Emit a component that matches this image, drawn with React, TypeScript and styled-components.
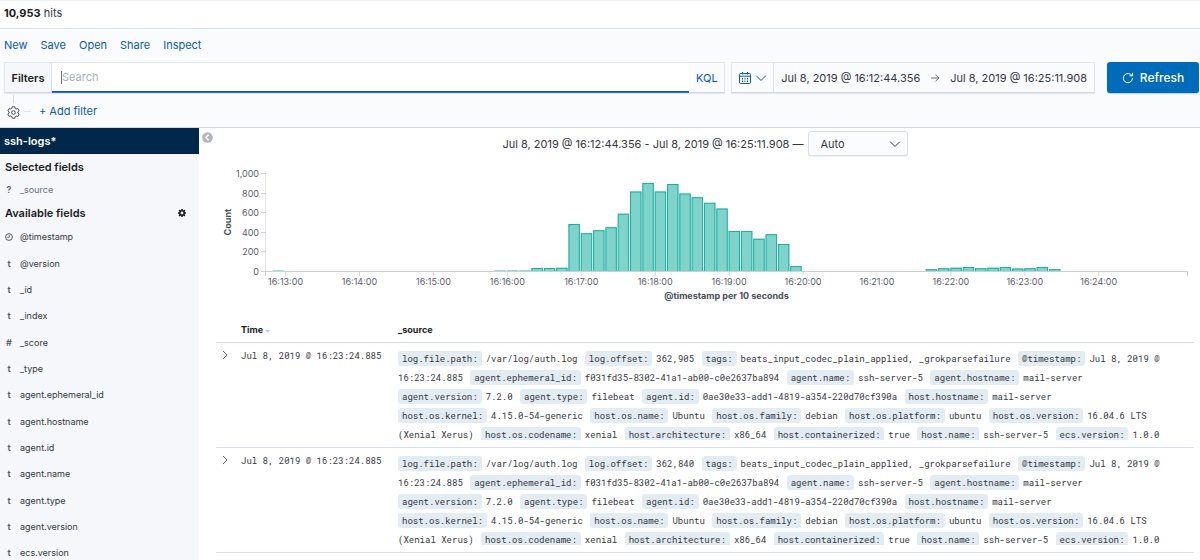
import React, { Fragment } from "react";
import styled, { createGlobalStyle, css } from "styled-components";

const sans = `Inter, "Liberation Sans", sans-serif`;
const mono = `"Roboto Mono", "DejaVu Sans Mono", "Liberation Mono", monospace`;

const GlobalStyle = createGlobalStyle`
  * { box-sizing: border-box; }
  html, body, #root { height: 100%; }
  body {
    margin: 0;
    overflow: hidden;
    background: #fff;
    color: #343741;
    font-family: ${sans};
    font-size: 11px;
    line-height: 16px;
  }
  button, input, select { font: inherit; color: inherit; }
  button { cursor: pointer; }
`;

const Page = styled.div`
  display: flex;
  flex-direction: column;
  height: 100%;
  border-top: 1px solid #f0f1f3;
`;

const Hits = styled.header`
  padding: 4px;
  height: 28px;
  border-bottom: 1px solid #dfe3ec;
  strong { color: #1a1c21; font-weight: 700; }
`;

const Toolbar = styled.section`
  background: #fafbfd;
  border-bottom: 1px solid #d3dae6;
  padding: 8px 1px 8px 4px;
`;

const Menu = styled.nav`
  display: flex;
  gap: 13px;
  margin-bottom: 9px;
`;

const TextLink = styled.a`
  color: #0a5aa8;
  text-decoration: none;
`;

const QueryRow = styled.div`
  display: flex;
  height: 31px;
`;

const QueryBox = styled.div`
  flex: 1;
  display: flex;
  border: 1px solid #e3e6ec;
  border-bottom-color: #d3d8e0;
  box-shadow: 0 1px 1px #e6e9ef;
  margin-right: 6px;
`;

const FiltersButton = styled.button`
  width: 47px;
  padding: 0;
  border: 0;
  border-right: 1px solid #dde1e9;
  background: #f5f7fa;
  color: #1a1c21;
  font-weight: 600;
`;

const SearchField = styled.label`
  flex: 1;
  display: flex;
  align-items: center;
  background: #fff;
  border-bottom: 1px solid #0a5aa8;
  box-shadow: 0 1px 0 #2a6fb3;
  padding-left: 9px;
  &::before {
    content: "";
    width: 1px;
    height: 13px;
    background: #69707d;
  }
`;

const SearchInput = styled.input`
  flex: 1;
  min-width: 0;
  border: 0;
  outline: 0;
  padding: 0;
  background: transparent;
  &::placeholder { color: #a9aeb8; opacity: 1; }
`;

const LanguageButton = styled.button`
  width: 35px;
  padding: 0;
  border: 0;
  background: #fafbfd;
  color: #0a5aa8;
`;

const DateBox = styled.div`
  display: flex;
  align-items: center;
  border: 1px solid #e3e6ec;
  border-bottom-color: #d3d8e0;
  box-shadow: 0 1px 1px #e6e9ef;
  margin-right: 12px;
`;

const QuickDates = styled.button`
  display: flex;
  align-items: center;
  gap: 4px;
  height: 100%;
  width: 42px;
  padding: 0 0 0 7px;
  border: 0;
  border-right: 1px solid #dde1e9;
  background: transparent;
  color: #0a5aa8;
`;

const DateButton = styled.button`
  padding: 0 7px;
  border: 0;
  background: transparent;
  white-space: nowrap;
`;

const RefreshButton = styled.button`
  display: flex;
  align-items: center;
  justify-content: center;
  gap: 6px;
  width: 92px;
  padding: 0;
  border: 0;
  border-radius: 3px;
  background: #006bb8;
  color: #fff;
  font-size: 12px;
  font-weight: 500;
  box-shadow: 0 1px 1px #b9cbdc;
`;

const FilterRow = styled.div`
  display: flex;
  align-items: center;
  margin-top: 10px;
`;

const FilterOptions = styled.button`
  position: relative;
  display: flex;
  padding: 0;
  margin: 2px 0 0 3px;
  border: 0;
  background: transparent;
  &::before {
    content: "";
    position: absolute;
    left: 6px;
    bottom: 16px;
    width: 1px;
    height: 8px;
    background: #d3dae6;
  }
`;

const Dash = styled.span`
  width: 7px;
  height: 1px;
  margin: 0 8px 0 4px;
  background: #dde2ea;
`;

const Body = styled.div`
  flex: 1;
  min-height: 0;
  display: flex;
`;

const Sidebar = styled.aside`
  width: 199px;
  flex: none;
  overflow: hidden;
  background: #f5f7fa;
`;

const IndexPattern = styled.h2`
  margin: 0 0 5px;
  padding: 5px 4px;
  background: #01284a;
  color: #fff;
  font-size: 11px;
  line-height: 16px;
  font-weight: 600;
`;

const GroupTitle = styled.h3`
  display: flex;
  align-items: center;
  justify-content: space-between;
  margin: 0;
  padding: 0 13px 0 5px;
  color: #1a1c21;
  font-size: 11px;
  line-height: 16px;
  font-weight: 600;
`;

const FieldList = styled.ul`
  list-style: none;
  margin: 0;
  padding: 3px 0;
  font-size: 9px;
`;

const Field = styled.li<{ $muted?: boolean }>`
  display: flex;
  align-items: center;
  padding-left: 4px;
  ${(p) =>
    p.$muted
      ? css`
          height: 24px;
          color: #69707d;
        `
      : css`
          height: 26px;
          &:nth-child(3n + 1) { margin-bottom: 1px; }
        `}
`;

const FieldType = styled.span`
  display: flex;
  justify-content: center;
  width: 10px;
  margin-right: 6px;
  font-weight: 600;
  color: #535966;
`;

const Main = styled.main`
  position: relative;
  flex: 1;
  min-width: 0;
  overflow: hidden;
  padding: 3px 6px 0 17px;
`;

const CollapseButton = styled.button`
  position: absolute;
  left: 3px;
  top: 4px;
  display: flex;
  padding: 0;
  border: 0;
  background: transparent;
`;

const RangeRow = styled.div`
  display: flex;
  align-items: center;
  justify-content: center;
  gap: 4px;
`;

const IntervalField = styled.label`
  position: relative;
  svg { position: absolute; right: 7px; top: 7px; pointer-events: none; }
`;

const IntervalSelect = styled.select`
  appearance: none;
  width: 100px;
  height: 25px;
  padding: 0 24px 0 12px;
  border: 1px solid #d9dee8;
  border-radius: 3px;
  background: #fbfcfd;
  box-shadow: 0 1px 1px #eceff4;
`;

const Chart = styled.svg`
  display: block;
  width: 100%;
  margin-top: 4px;
  overflow: visible;
  font-family: ${sans};
  font-size: 9px;
  fill: #5a606b;
`;

const Docs = styled.table`
  width: 100%;
  margin-top: 15px;
  border-collapse: collapse;
  table-layout: fixed;
  th {
    padding: 5px 0;
    text-align: left;
    color: #1a1c21;
    font-size: 9px;
    line-height: 15px;
    font-weight: 700;
  }
  tr { border-bottom: 1px solid #d9dfea; }
  td { padding: 0; vertical-align: top; }
`;

const ExpandCol = styled.col`width: 25px;`;
const TimeCol = styled.col`width: 157px;`;

const ExpandButton = styled.button`
  display: flex;
  margin: 7px 0 0 4px;
  padding: 0;
  border: 0;
  background: transparent;
`;

const Time = styled.time`
  display: block;
  padding-top: 5px;
  font-family: ${mono};
  font-size: 9px;
  line-height: 16px;
  white-space: nowrap;
`;

const Source = styled.div`
  max-height: 91px;
  margin: 6px 0 7px;
  padding-right: 30px;
  overflow: hidden;
  font-family: ${mono};
  font-size: 9px;
  line-height: 19px;
`;

const Unbroken = styled.span`
  white-space: nowrap;
`;

const Key = styled.span`
  display: inline-block;
  padding: 0 4px;
  margin-right: 4px;
  border-radius: 3px;
  background: #e3ecf3;
  line-height: 15px;
`;

const Value = styled.span<{ $last: boolean }>`
  margin-right: ${(p) => (p.$last ? 2 : 0)}px;
`;

const fields: [string, string][] = [
  ["clock", "@timestamp"],
  ["t", "@version"],
  ["t", "_id"],
  ["t", "_index"],
  ["#", "_score"],
  ["t", "_type"],
  ["t", "agent.ephemeral_id"],
  ["t", "agent.hostname"],
  ["t", "agent.id"],
  ["t", "agent.name"],
  ["t", "agent.type"],
  ["t", "agent.version"],
  ["t", "ecs.version"],
];

const source = (offset: string): [string, string][] => [
  ["log.file.path", "/var/log/auth.log"],
  ["log.offset", offset],
  ["tags", "beats_input_codec_plain_applied, _grokparsefailure"],
  ["@timestamp", "Jul 8, 2019 @ 16:23:24.885"],
  ["agent.ephemeral_id", "f031fd35-8302-41a1-ab00-c0e2637ba894"],
  ["agent.name", "ssh-server-5"],
  ["agent.hostname", "mail-server"],
  ["agent.version", "7.2.0"],
  ["agent.type", "filebeat"],
  ["agent.id", "0ae30e33-add1-4819-a354-220d70cf390a"],
  ["host.hostname", "mail-server"],
  ["host.os.kernel", "4.15.0-54-generic"],
  ["host.os.name", "Ubuntu"],
  ["host.os.family", "debian"],
  ["host.os.platform", "ubuntu"],
  ["host.os.version", "16.04.6 LTS (Xenial Xerus)"],
  ["host.os.codename", "xenial"],
  ["host.architecture", "x86_64"],
  ["host.containerized", "true"],
  ["host.name", "ssh-server-5"],
  ["ecs.version", "1.0.0"],
];

const docs = [source("362,905"), source("362,840")];

/* Ten-second buckets, numbered from 16:13:00. */
const buckets: [number, number[]][] = [
  [-1, [8]],
  [17, [9, 10, 10, 31, 31, 34, 481, 386, 417, 447, 586, 812, 898, 812, 887, 791, 754, 696, 638, 409, 409, 331, 376, 276, 51]],
  [52, [20, 30, 35, 41, 30, 35, 41, 27, 30, 41, 20]],
];

const CHART = { left: 50, right: 971, top: 13, bottom: 111, minute: 73.85, origin: 69.5 };

const Chevron = ({ size = 12, d = "M1.5 4l4.5 4.5L10.5 4" }: { size?: number; d?: string }) => (
  <svg width={size} height={size} viewBox="0 0 12 12" fill="none" stroke="currentColor" strokeWidth="1">
    <path d={d} strokeLinecap="round" strokeLinejoin="round" />
  </svg>
);

const GearOutline = () => (
  <svg width="13" height="13" viewBox="0 0 16 16" fill="none" stroke="#343741" strokeWidth="1.1" strokeLinejoin="round">
    <path d="M6.4 1h3.2l.5 2 1.2.7 2-.6 1.6 2.8L13.4 7.3v1.4l1.5 1.4-1.6 2.8-2-.6-1.2.7-.5 2H6.4l-.5-2-1.2-.7-2 .6-1.6-2.8 1.5-1.4V7.3L1.1 5.9l1.6-2.8 2 .6 1.2-.7z" />
    <circle cx="8" cy="8" r="2.3" />
  </svg>
);

const GearSolid = () => (
  <svg width="8" height="8" viewBox="0 0 16 16" fill="none" stroke="#1a1c21">
    <circle cx="8" cy="8" r="4.5" strokeWidth="3.2" />
    <path d="M8 0v3M8 13v3M0 8h3M13 8h3M2.3 2.3l2.2 2.2M11.5 11.5l2.2 2.2M2.3 13.7l2.2-2.2M11.5 4.5l2.2-2.2" strokeWidth="3" />
  </svg>
);

const Calendar = () => (
  <svg width="12" height="12" viewBox="0 0 12 12" fill="none" stroke="currentColor">
    <rect x=".5" y="1.5" width="11" height="10" rx="1" />
    <path d="M.5 4.2h11M3.5 0v2.5M8.5 0v2.5" />
    <path d="M3 6.5h6M3 8h6M3 9.5h6" strokeDasharray="1 1.5" />
  </svg>
);

const Refresh = () => (
  <svg width="12" height="12" viewBox="0 0 12 12" fill="none" stroke="currentColor" strokeWidth="1">
    <path d="M10.5 6.2A4.6 4.6 0 1 1 8.6 2.4L10.3 3.6" />
    <path d="M10.5.8v3H7.6" />
  </svg>
);

const Clock = () => (
  <svg width="8" height="8" viewBox="0 0 8 8" fill="none" stroke="#535966">
    <circle cx="4" cy="4" r="3.4" />
    <path d="M4.3 1.8v2.5H2.2" strokeWidth=".8" />
  </svg>
);

function Histogram() {
  const { left, right, top, bottom, minute, origin } = CHART;
  const y = (count: number) => bottom - (count / 1000) * (bottom - top);
  const pitch = minute / 6;
  return (
    <Chart viewBox="0 0 977 142" role="img" aria-label="Count of @timestamp per 10 seconds">
      <path d={`M${left - 0.5} ${top}V${bottom}`} stroke="#e6e6e6" />
      {buckets.map(([start, counts]) =>
        counts.map((count, i) => {
          const x = origin + (start + i) * pitch - 0.5;
          const w = pitch - 0.9;
          return (
            <g key={start + i}>
              <rect x={x} y={y(count)} width={w} height={bottom - y(count)} fill="#80d3cb" />
              {count > 10 && (
                <path d={`M${x + 0.5} ${bottom}V${y(count) + 0.5}h${w - 1}V${bottom}`} fill="none" stroke="#1bb0a3" />
              )}
            </g>
          );
        }),
      )}
      <path d={`M${left} ${bottom + 0.5}H${right}M${left - 0.5} ${bottom}v5M${right - 0.5} ${bottom}v5`} stroke="#cfcfcf" fill="none" />
      {[0, 200, 400, 600, 800, 1000].map((v) => (
        <Fragment key={v}>
          <path d={`M${left - 5} ${Math.round(y(v)) + 0.5}h5`} stroke="#cfcfcf" />
          <text x={left - 7} y={y(v) + 4} textAnchor="end">
            {v.toLocaleString("en-US")}
          </text>
        </Fragment>
      ))}
      {Array.from({ length: 12 }, (_, i) => (
        <Fragment key={i}>
          <path d={`M${origin + i * minute} ${bottom + 1}v4`} stroke="#d6d6d6" />
          <text x={origin + i * minute} y={bottom + 14} textAnchor="middle">
            {`16:${13 + i}:00`}
          </text>
        </Fragment>
      ))}
      <g fontWeight="700" fill="#4a4e58" textAnchor="middle">
        <text transform="translate(15 62) rotate(-90)">Count</text>
        <text x="510" y="139">@timestamp per 10 seconds</text>
      </g>
    </Chart>
  );
}

/* A key never parts from the first word of its value. */
function SourceCell({ entries }: { entries: [string, string][] }) {
  return (
    <Source>
      {entries.map(([key, value]) => {
        const [first, ...rest] = value.split(" ");
        return (
          <Fragment key={key}>
            <Unbroken>
              <Key>{`${key}:`}</Key>
              <Value $last={rest.length === 0}>{first}</Value>
            </Unbroken>{" "}
            {rest.length > 0 && <Value $last>{rest.join(" ")}</Value>}{" "}
          </Fragment>
        );
      })}
    </Source>
  );
}

export default function App() {
  return (
    <Page>
      <GlobalStyle />
      <Hits>
        <strong>10,953</strong> hits
      </Hits>
      <Toolbar>
        <Menu>
          {["New", "Save", "Open", "Share", "Inspect"].map((item) => (
            <TextLink href="#" key={item}>{item}</TextLink>
          ))}
        </Menu>
        <QueryRow>
          <QueryBox>
            <FiltersButton>Filters</FiltersButton>
            <SearchField>
              <SearchInput aria-label="Search" placeholder="Search" />
            </SearchField>
            <LanguageButton>KQL</LanguageButton>
          </QueryBox>
          <DateBox>
            <QuickDates aria-label="Quick date ranges">
              <Calendar />
              <Chevron />
            </QuickDates>
            <DateButton>Jul 8, 2019 @ 16:12:44.356</DateButton>
            <svg width="16" height="10" viewBox="0 0 16 10" fill="none" stroke="#69707d">
              <path d="M4 5h8M8.5 1.8L12 5 8.5 8.2" />
            </svg>
            <DateButton>Jul 8, 2019 @ 16:25:11.908</DateButton>
          </DateBox>
          <RefreshButton>
            <Refresh />
            Refresh
          </RefreshButton>
        </QueryRow>
        <FilterRow>
          <FilterOptions aria-label="Filter options">
            <GearOutline />
          </FilterOptions>
          <Dash />
          <TextLink href="#">+ Add filter</TextLink>
        </FilterRow>
      </Toolbar>
      <Body>
        <Sidebar>
          <IndexPattern>ssh-logs*</IndexPattern>
          <GroupTitle>Selected fields</GroupTitle>
          <FieldList>
            <Field $muted>
              <FieldType>?</FieldType>_source
            </Field>
          </FieldList>
          <GroupTitle>
            Available fields
            <GearSolid />
          </GroupTitle>
          <FieldList>
            {fields.map(([type, name]) => (
              <Field key={name}>
                <FieldType>{type === "clock" ? <Clock /> : type}</FieldType>
                {name}
              </Field>
            ))}
          </FieldList>
        </Sidebar>
        <Main>
          <CollapseButton aria-label="Collapse sidebar">
            <svg width="11" height="11" viewBox="0 0 11 11" fill="none">
              <circle cx="5.5" cy="5.5" r="5.3" fill="#b2b5ba" />
              <path d="M6.6 2.8L3.9 5.5l2.7 2.7" stroke="#fff" strokeWidth="1.6" />
            </svg>
          </CollapseButton>
          <RangeRow>
            <span>Jul 8, 2019 @ 16:12:44.356 - Jul 8, 2019 @ 16:25:11.908 —</span>
            <IntervalField>
              <IntervalSelect aria-label="Interval">
                <option>Auto</option>
              </IntervalSelect>
              <Chevron />
            </IntervalField>
          </RangeRow>
          <Histogram />
          <Docs>
            <colgroup>
              <ExpandCol />
              <TimeCol />
              <col />
            </colgroup>
            <thead>
              <tr>
                <th />
                <th>
                  Time{" "}
                  <svg width="5" height="3" viewBox="0 0 5 3">
                    <path d="M0 0h5L2.5 3z" fill="#c3cfdf" />
                  </svg>
                </th>
                <th>_source</th>
              </tr>
            </thead>
            <tbody>
              {docs.map((entries, i) => (
                <tr key={i}>
                  <td>
                    <ExpandButton aria-label="Expand document">
                      <Chevron size={10} d="M4 1.5L8.5 6 4 10.5" />
                    </ExpandButton>
                  </td>
                  <td>
                    <Time>Jul 8, 2019 @ 16:23:24.885</Time>
                  </td>
                  <td>
                    <SourceCell entries={entries} />
                  </td>
                </tr>
              ))}
            </tbody>
          </Docs>
        </Main>
      </Body>
    </Page>
  );
}
